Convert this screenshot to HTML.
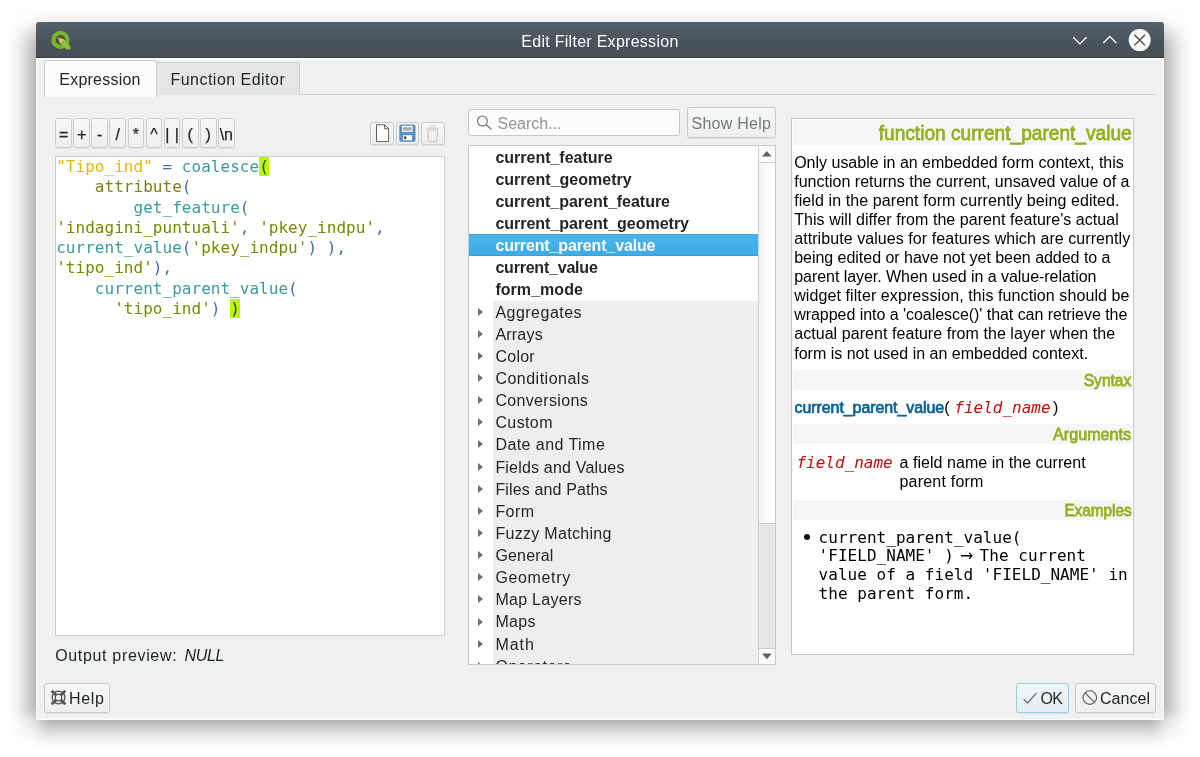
<!DOCTYPE html>
<html lang="en">
<head>
<meta charset="utf-8">
<title>Edit Filter Expression</title>
<style>
html,body{margin:0;padding:0;background:#fff;}
body{width:1200px;height:757px;position:relative;overflow:hidden;font-family:"Liberation Sans","DejaVu Sans",sans-serif;font-size:16px;color:#232627;}
div,span,pre,svg{position:absolute;box-sizing:border-box;}
span{white-space:pre;}
pre span{position:static;}
#shadow{left:0;top:0;width:1200px;height:757px;background:linear-gradient(to right,rgba(0,0,0,0.000) 7.5px,rgba(0,0,0,0.016) 11.5px,rgba(0,0,0,0.050) 16.5px,rgba(0,0,0,0.099) 21.5px,rgba(0,0,0,0.162) 26.5px,rgba(0,0,0,0.220) 31.5px,rgba(0,0,0,0.290) 36.5px,rgba(0,0,0,0.383) 39.5px,rgba(0,0,0,0.464) 42.5px,rgba(0,0,0,0.534) 46.5px,rgba(0,0,0,0.580) 51.5px,rgba(0,0,0,0.580) 1148.5px,rgba(0,0,0,0.534) 1153.5px,rgba(0,0,0,0.464) 1157.5px,rgba(0,0,0,0.383) 1160.5px,rgba(0,0,0,0.290) 1163.5px,rgba(0,0,0,0.220) 1168.5px,rgba(0,0,0,0.162) 1173.5px,rgba(0,0,0,0.099) 1178.5px,rgba(0,0,0,0.050) 1183.5px,rgba(0,0,0,0.016) 1188.5px,rgba(0,0,0,0.000) 1192.5px);-webkit-mask-image:linear-gradient(to bottom,rgba(0,0,0,0.000) 8.0px,rgba(0,0,0,0.050) 15.0px,rgba(0,0,0,0.110) 22.0px,rgba(0,0,0,0.250) 26.0px,rgba(0,0,0,0.420) 30.0px,rgba(0,0,0,0.620) 35.0px,rgba(0,0,0,0.800) 40.0px,rgba(0,0,0,0.920) 45.0px,rgba(0,0,0,1.000) 52.0px,rgba(0,0,0,1.000) 705.3px,rgba(0,0,0,0.920) 710.3px,rgba(0,0,0,0.800) 714.3px,rgba(0,0,0,0.660) 717.3px,rgba(0,0,0,0.500) 720.3px,rgba(0,0,0,0.380) 725.3px,rgba(0,0,0,0.280) 730.3px,rgba(0,0,0,0.170) 735.3px,rgba(0,0,0,0.086) 740.3px,rgba(0,0,0,0.028) 745.3px,rgba(0,0,0,0.000) 749.3px);mask-image:linear-gradient(to bottom,rgba(0,0,0,0.000) 8.0px,rgba(0,0,0,0.050) 15.0px,rgba(0,0,0,0.110) 22.0px,rgba(0,0,0,0.250) 26.0px,rgba(0,0,0,0.420) 30.0px,rgba(0,0,0,0.620) 35.0px,rgba(0,0,0,0.800) 40.0px,rgba(0,0,0,0.920) 45.0px,rgba(0,0,0,1.000) 52.0px,rgba(0,0,0,1.000) 705.3px,rgba(0,0,0,0.920) 710.3px,rgba(0,0,0,0.800) 714.3px,rgba(0,0,0,0.660) 717.3px,rgba(0,0,0,0.500) 720.3px,rgba(0,0,0,0.380) 725.3px,rgba(0,0,0,0.280) 730.3px,rgba(0,0,0,0.170) 735.3px,rgba(0,0,0,0.086) 740.3px,rgba(0,0,0,0.028) 745.3px,rgba(0,0,0,0.000) 749.3px);}
#win{left:36.2px;top:22px;width:1127.8px;height:698px;background:#eff0f1;border-radius:3px 3px 0 0;box-shadow:inset 1.5px 0 0 #fbfcfc,inset -1.5px 0 0 #fbfcfc,inset 0 -1.4px 0 #fbfcfc;}
#titlebar{left:36.2px;top:22px;width:1127.8px;height:36.1px;background:linear-gradient(#56606a,#48525a 60%,#465055);border-radius:3px 3px 0 0;border-bottom:1.2px solid #3a4147;}
#topline{left:36.2px;top:58.1px;width:1127.8px;height:1.5px;background:#fbfcfc;}
#root{left:0;top:0;width:1200px;height:757px;will-change:transform;}
#tab1{left:44px;top:60px;width:112.5px;height:37px;background:#fcfcfc;border:1px solid #cdcfd0;border-bottom:none;border-radius:3px 3px 0 0;}
#tab2{left:156.5px;top:62px;width:143px;height:33px;background:#e4e5e6;border:1px solid #cbcdce;border-left:none;border-bottom:none;border-radius:0 3px 0 0;}
#tabline{left:299px;top:94px;width:857px;height:1px;background:#cfd1d2;}
.btn{border:1px solid #c8cacb;border-radius:3px;background:linear-gradient(#f6f7f7,#edeeef);box-shadow:0 1px 1px rgba(0,0,0,.07);}
.op{top:118px;width:16.8px;height:30.4px;border-radius:2.5px;border-color:#cdcfd0;}
.opt{top:124.8px;width:16.8px;text-align:center;height:20px;line-height:20px;-webkit-text-stroke:.25px #232627;}
#editor{left:55px;top:156px;width:389.7px;height:480px;background:#fff;border:1px solid #cbcdce;}
#code{left:56.2px;top:157.2px;letter-spacing:.03px;margin:0;font-family:"DejaVu Sans Mono","Liberation Mono",monospace;font-size:16px;line-height:20.25px;white-space:pre;}
.qi{color:#eab700}.opc{color:#4271ae}.fn{color:#3e999f}.kw{color:#7f7f17}.st{color:#718c00}.pa{color:#4271ae}.mb{background:#b7f907;color:#373737}
#search{left:468px;top:109px;width:212px;height:27px;background:#fcfcfc;border:1px solid #c6c8c9;border-radius:3px;}
#list{left:468px;top:145px;width:308px;height:520px;background:#fff;border:1px solid #c6c8c9;overflow:hidden;}
#listin{left:0;top:0;width:290px;height:518px;overflow:hidden;}
.row{left:0;width:290px;height:22.13px;}
.grp{left:24px;width:265px;height:22.13px;background:#eeeeee;}
.sel{left:0;width:289.5px;height:21.9px;background:linear-gradient(#4ab4ec,#3eabe6);border-top:1px solid #3fa6dd;border-bottom:1px solid #3b9fd6;}
.arr{left:9px;width:0;height:0;border-left:5px solid #6c6e6f;border-top:4.5px solid transparent;border-bottom:4.5px solid transparent;}
#sb{left:758px;top:146px;width:16.5px;height:518px;background:linear-gradient(90deg,#f2f2f2,#fdfdfd 40%,#fff);border-left:1px solid #cfd0d1;}
#help{left:791px;top:118.4px;width:343px;height:536.5px;background:#fff;border:1px solid #c6c8c9;overflow:hidden;}
.band{left:793px;width:339px;background:#f6f6f6;}
.h{color:#93b023;font-weight:bold;}
.hl{height:19px;line-height:19px;}
.mono{font-family:"DejaVu Sans Mono","Liberation Mono",monospace;}
</style>
</head>
<body>
<div id="root">
<div id="shadow"></div>
<div id="win"></div>
<div id="titlebar"></div>
<div id="topline"></div>
<span style="left:521.3px;color:#fcfcfc;top:32px;height:20px;line-height:20px;letter-spacing:0.278px">Edit Filter Expression</span>

<div id="tab1"></div>
<div id="tab2"></div>
<div id="tabline"></div>
<span style="left:59.3px;top:70.2px;height:20px;line-height:20px;letter-spacing:0.227px">Expression</span>
<span style="left:170.5px;top:70.2px;height:20px;line-height:20px;letter-spacing:0.471px">Function Editor</span>

<div class="btn op" style="left:55.20px"></div><span class="opt" style="left:55.20px">=</span><div class="btn op" style="left:73.28px"></div><span class="opt" style="left:73.28px">+</span><div class="btn op" style="left:91.36px"></div><span class="opt" style="left:91.36px">-</span><div class="btn op" style="left:109.44px"></div><span class="opt" style="left:109.44px">/</span><div class="btn op" style="left:127.52px"></div><span class="opt" style="left:127.52px">*</span><div class="btn op" style="left:145.60px"></div><span class="opt" style="left:145.60px">^</span><div class="btn op" style="left:163.68px"></div><span class="opt" style="left:163.68px"><i style="font-style:normal;letter-spacing:5.4px;margin-right:-5.4px">||</i></span><div class="btn op" style="left:181.76px"></div><span class="opt" style="left:181.76px">(</span><div class="btn op" style="left:199.84px"></div><span class="opt" style="left:199.84px">)</span><div class="btn op" style="left:217.92px"></div><span class="opt" style="left:217.92px">\n</span>

<div class="btn" style="left:370.2px;top:121.8px;width:23.6px;height:23.6px"></div>
<div class="btn" style="left:395.6px;top:121.8px;width:23.6px;height:23.6px"></div>
<div class="btn" style="left:421px;top:121.8px;width:23.6px;height:23.6px"></div>

<div id="editor"></div>
<pre id="code"><span class="qi">"Tipo_ind"</span> <span class="opc">=</span> <span class="fn">coalesce</span><span class="mb">(</span>
    <span class="kw">attribute</span><span class="pa">(</span>
        <span class="fn">get_feature</span><span class="pa">(</span>
<span class="st">'indagini_puntuali'</span><span class="pa">,</span> <span class="st">'pkey_indpu'</span><span class="pa">,</span>
<span class="fn">current_value</span><span class="pa">(</span><span class="st">'pkey_indpu'</span><span class="pa">)</span> <span class="pa">),</span>
<span class="st">'tipo_ind'</span><span class="pa">),</span>
    <span class="fn">current_parent_value</span><span class="pa">(</span>
      <span class="st">'tipo_ind'</span><span class="pa">)</span> <span class="mb">)</span></pre>

<span style="left:55.2px;top:645.8px;height:20px;line-height:20px;letter-spacing:0.667px">Output preview:</span>
<span style="left:184.5px;font-style:italic;top:645.8px;height:20px;line-height:20px;letter-spacing:-0.302px">NULL</span>

<div id="search"></div>
<span style="left:497.5px;color:#929496;top:113.6px;height:20px;line-height:20px;letter-spacing:-0.004px">Search...</span>
<div class="btn" style="left:686.5px;top:107px;width:89.5px;height:30.6px"></div>
<span style="left:691.5px;color:#75787a;top:113.8px;height:20px;line-height:20px;letter-spacing:0.266px">Show Help</span>

<div id="list"></div>
<div id="listin" style="left:469px;top:145.7px">
<span style="left:26.4px;top:2.00px;height:20px;line-height:20px;font-weight:bold;letter-spacing:-0.005px">current_feature</span>
<span style="left:26.4px;top:24.13px;height:20px;line-height:20px;font-weight:bold;letter-spacing:0.017px">current_geometry</span>
<span style="left:26.4px;top:46.26px;height:20px;line-height:20px;font-weight:bold;letter-spacing:-0.027px">current_parent_feature</span>
<span style="left:26.4px;top:68.39px;height:20px;line-height:20px;font-weight:bold;letter-spacing:-0.011px">current_parent_geometry</span>
<div class="sel" style="top:88.52px"></div>
<span style="left:26.4px;top:90.52px;height:20px;line-height:20px;font-weight:bold;color:#fcfcfc;letter-spacing:-0.139px">current_parent_value</span>
<span style="left:26.4px;top:112.65px;height:20px;line-height:20px;font-weight:bold;letter-spacing:-0.211px">current_value</span>
<span style="left:26.4px;top:134.78px;height:20px;line-height:20px;font-weight:bold;letter-spacing:0.047px">form_mode</span>
<div class="grp" style="top:154.91px"></div>
<div class="arr" style="top:162.01px"></div>
<span style="left:26.4px;top:156.91px;height:20px;line-height:20px;letter-spacing:0.484px">Aggregates</span>
<div class="grp" style="top:177.04px"></div>
<div class="arr" style="top:184.14px"></div>
<span style="left:26.4px;top:179.04px;height:20px;line-height:20px;letter-spacing:0.213px">Arrays</span>
<div class="grp" style="top:199.17px"></div>
<div class="arr" style="top:206.27px"></div>
<span style="left:26.4px;top:201.17px;height:20px;line-height:20px;letter-spacing:0.266px">Color</span>
<div class="grp" style="top:221.30px"></div>
<div class="arr" style="top:228.40px"></div>
<span style="left:26.4px;top:223.30px;height:20px;line-height:20px;letter-spacing:0.494px">Conditionals</span>
<div class="grp" style="top:243.43px"></div>
<div class="arr" style="top:250.53px"></div>
<span style="left:26.4px;top:245.43px;height:20px;line-height:20px;letter-spacing:0.336px">Conversions</span>
<div class="grp" style="top:265.56px"></div>
<div class="arr" style="top:272.66px"></div>
<span style="left:26.4px;top:267.56px;height:20px;line-height:20px;letter-spacing:0.395px">Custom</span>
<div class="grp" style="top:287.69px"></div>
<div class="arr" style="top:294.79px"></div>
<span style="left:26.4px;top:289.69px;height:20px;line-height:20px;letter-spacing:0.445px">Date and Time</span>
<div class="grp" style="top:309.82px"></div>
<div class="arr" style="top:316.92px"></div>
<span style="left:26.4px;top:311.82px;height:20px;line-height:20px;letter-spacing:0.188px">Fields and Values</span>
<div class="grp" style="top:331.95px"></div>
<div class="arr" style="top:339.05px"></div>
<span style="left:26.4px;top:333.95px;height:20px;line-height:20px;letter-spacing:0.137px">Files and Paths</span>
<div class="grp" style="top:354.08px"></div>
<div class="arr" style="top:361.18px"></div>
<span style="left:26.4px;top:356.08px;height:20px;line-height:20px;letter-spacing:0.457px">Form</span>
<div class="grp" style="top:376.21px"></div>
<div class="arr" style="top:383.31px"></div>
<span style="left:26.4px;top:378.21px;height:20px;line-height:20px;letter-spacing:0.304px">Fuzzy Matching</span>
<div class="grp" style="top:398.34px"></div>
<div class="arr" style="top:405.44px"></div>
<span style="left:26.4px;top:400.34px;height:20px;line-height:20px;letter-spacing:0.18px">General</span>
<div class="grp" style="top:420.47px"></div>
<div class="arr" style="top:427.57px"></div>
<span style="left:26.4px;top:422.47px;height:20px;line-height:20px;letter-spacing:0.65px">Geometry</span>
<div class="grp" style="top:442.60px"></div>
<div class="arr" style="top:449.70px"></div>
<span style="left:26.4px;top:444.60px;height:20px;line-height:20px;letter-spacing:0.29px">Map Layers</span>
<div class="grp" style="top:464.73px"></div>
<div class="arr" style="top:471.83px"></div>
<span style="left:26.4px;top:466.73px;height:20px;line-height:20px;letter-spacing:0.292px">Maps</span>
<div class="grp" style="top:486.86px"></div>
<div class="arr" style="top:493.96px"></div>
<span style="left:26.4px;top:488.86px;height:20px;line-height:20px;letter-spacing:0.941px">Math</span>
<div class="grp" style="top:508.99px"></div>
<div class="arr" style="top:516.09px"></div>
<span style="left:26.4px;top:510.99px;height:20px;line-height:20px;letter-spacing:0.545px">Operators</span>
</div>

<div id="sb"></div>
<div style="left:759px;top:146px;width:16px;height:16.5px;background:#fbfbfb;border-bottom:1px solid #d2d3d4"></div>
<div style="left:759px;top:522.5px;width:16px;height:126px;background:#e6e6e6;border-top:1px solid #cbcbcc;border-bottom:1px solid #cbcbcc"></div>
<div style="left:759px;top:648.5px;width:16px;height:15.5px;background:#fbfbfb"></div>
<svg style="left:759px;top:146px" width="17" height="518" viewBox="759 146 17 518">
 <path d="M761.9 156.5 L766.8 150.9 L771.7 156.5 Z" fill="#606263"/>
 <path d="M762 653.6 L771.8 653.6 L766.9 659.2 Z" fill="#606263"/>
</svg>


<div id="help"></div>
<div class="band" style="top:119.5px;height:25px"></div>
<span style="right:68.40000000000009px;transform-origin:100% 50%;font-size:20.7px;color:#93b023;-webkit-text-stroke:.8px #93b023;top:121.3px;height:24px;line-height:24px;transform:scaleX(0.9243)">function current_parent_value</span>
<span style="left:794.2px;color:#000;top:152.5px;height:19px;line-height:19px;letter-spacing:-0.008px">Only usable in an embedded form context, this</span>
<span style="left:794.2px;color:#000;top:171.6px;height:19px;line-height:19px;letter-spacing:0.019px">function returns the current, unsaved value of a</span>
<span style="left:794.2px;color:#000;top:190.7px;height:19px;line-height:19px;letter-spacing:0.09px">field in the parent form currently being edited.</span>
<span style="left:794.2px;color:#000;top:209.8px;height:19px;line-height:19px;letter-spacing:0.054px">This will differ from the parent feature's actual</span>
<span style="left:794.2px;color:#000;top:228.9px;height:19px;line-height:19px;letter-spacing:0.071px">attribute values for features which are currently</span>
<span style="left:794.2px;color:#000;top:248.0px;height:19px;line-height:19px;letter-spacing:-0.03px">being edited or have not yet been added to a</span>
<span style="left:794.2px;color:#000;top:267.1px;height:19px;line-height:19px;letter-spacing:-0.045px">parent layer. When used in a value-relation</span>
<span style="left:794.2px;color:#000;top:286.2px;height:19px;line-height:19px;letter-spacing:0.093px">widget filter expression, this function should be</span>
<span style="left:794.2px;color:#000;top:305.3px;height:19px;line-height:19px;letter-spacing:-0.043px">wrapped into a 'coalesce()' that can retrieve the</span>
<span style="left:794.2px;color:#000;top:324.4px;height:19px;line-height:19px;letter-spacing:0.059px">actual parent feature from the layer when the</span>
<span style="left:794.2px;color:#000;top:343.5px;height:19px;line-height:19px;letter-spacing:0.01px">form is not used in an embedded context.</span>
<div class="band" style="top:370.2px;height:19.5px"></div>
<span style="right:68.40000000000009px;transform-origin:100% 50%;font-size:16.8px;color:#93b023;-webkit-text-stroke:.8px #93b023;top:371px;height:20px;line-height:20px;transform:scaleX(0.9276)">Syntax</span>
<span style="left:794.6px;color:#0a6099;-webkit-text-stroke:.7px #0a6099;top:397.5px;height:20px;line-height:20px;letter-spacing:-0.085px">current_parent_value</span>
<span style="left:944.2px;top:397.5px;height:20px;line-height:20px;color:#000">(</span>
<span style="left:954.3px;color:#bf0c0c;font-style:italic;font-family:'DejaVu Sans Mono','Liberation Mono',monospace;top:397.5px;height:20px;line-height:20px;letter-spacing:-0.003px">field_name</span>
<span style="left:1053px;top:397.5px;height:20px;line-height:20px;color:#000">)</span>
<div class="band" style="top:424.2px;height:19.5px"></div>
<span style="right:68.40000000000009px;transform-origin:100% 50%;font-size:16.8px;color:#93b023;-webkit-text-stroke:.8px #93b023;top:425px;height:20px;line-height:20px;transform:scaleX(0.9623)">Arguments</span>
<span style="left:796.4px;color:#bf0c0c;font-style:italic;font-family:'DejaVu Sans Mono','Liberation Mono',monospace;top:452.8px;height:20px;line-height:20px;letter-spacing:-0.003px">field_name</span>
<span style="left:899.6px;color:#000;top:452.8px;height:20px;line-height:20px;letter-spacing:0.038px">a field name in the current</span>
<span style="left:899.4px;color:#000;top:471.6px;height:20px;line-height:20px;letter-spacing:0.219px">parent form</span>
<div class="band" style="top:500.4px;height:19.5px"></div>
<span style="right:68.40000000000009px;transform-origin:100% 50%;font-size:16.8px;color:#93b023;-webkit-text-stroke:.8px #93b023;top:501.2px;height:20px;line-height:20px;transform:scaleX(0.9133)">Examples</span>
<div style="left:803.6px;top:534.2px;width:6.2px;height:6.2px;border-radius:3.1px;background:#111"></div>
<span style="left:818.6px;color:#000;font-family:'DejaVu Sans Mono','Liberation Mono',monospace;top:527.7px;height:19px;line-height:19px;letter-spacing:0.028px">current_parent_value(</span>
<span style="left:818.6px;color:#000;font-family:'DejaVu Sans Mono','Liberation Mono',monospace;top:546.4px;height:19px;line-height:19px;letter-spacing:0.029px">'FIELD_NAME' )</span>
<span style="left:953.6px;top:546.4px;width:26px;text-align:center;height:19px;line-height:19px;color:#000;font-family:'DejaVu Sans',sans-serif;font-size:16px">→</span>
<span style="left:979.6px;color:#000;font-family:'DejaVu Sans Mono','Liberation Mono',monospace;top:546.4px;height:19px;line-height:19px;letter-spacing:0.029px">The current</span>
<span style="left:818.6px;color:#000;font-family:'DejaVu Sans Mono','Liberation Mono',monospace;top:565.1px;height:19px;line-height:19px;letter-spacing:0.028px">value of a field 'FIELD_NAME' in</span>
<span style="left:818.6px;color:#000;font-family:'DejaVu Sans Mono','Liberation Mono',monospace;top:583.8px;height:19px;line-height:19px;letter-spacing:0.029px">the parent form.</span>

<div class="btn" style="left:44.2px;top:683px;width:65.4px;height:30px"></div>
<span style="left:69px;top:688.6px;height:20px;line-height:20px;letter-spacing:0.698px">Help</span>
<div class="btn" style="left:1015.6px;top:683px;width:53.4px;height:30px;border-color:#93cee9;background:linear-gradient(#f0f6fa,#e4eef4)"></div>
<span style="left:1040.5px;top:688.6px;height:20px;line-height:20px;letter-spacing:-0.625px">OK</span>
<div class="btn" style="left:1075.2px;top:683px;width:80.5px;height:30px"></div>
<span style="left:1100px;top:688.6px;height:20px;line-height:20px;letter-spacing:0.037px">Cancel</span>

<!-- QGIS logo -->
<svg style="left:49px;top:29px" width="24" height="24" viewBox="49 29 24 24">
 <circle cx="60.4" cy="39.9" r="4.9" fill="#46524a"/>
 <circle cx="60.4" cy="39.9" r="7" fill="none" stroke="#76b42d" stroke-width="4.3"/>
 <path d="M60 43.2 L63.8 39.4 L70.3 45.9 L70.3 49.5 L66.4 49.5 Z" fill="#86c23a"/>
 <path d="M57.4 37 L63.9 39.5 L60.1 43.3 Z" fill="#eea534"/>
 <path d="M61.3 38.5 L63.9 39.5 L60.1 43.3 L59.1 40.7 Z" fill="#e2c95a"/>
</svg>
<!-- title buttons -->
<svg style="left:1068px;top:26px" width="90" height="30" viewBox="1068 26 90 30" fill="none" stroke="#fcfcfc" stroke-width="1.35">
 <path d="M1073.3 37.3 L1079.9 43.9 L1086.5 37.3"/>
 <path d="M1103.3 42.9 L1109.8 36.4 L1116.3 42.9"/>
 <circle cx="1139.7" cy="40.1" r="11" fill="#fcfcfc" stroke="none"/>
 <path d="M1134.4 34.8 L1145 45.4 M1145 34.8 L1134.4 45.4" stroke="#3b4045" stroke-width="1.3"/>
</svg>
<!-- toolbar icons -->
<svg style="left:370px;top:121px" width="76" height="26" viewBox="370 121 76 26">
 <path d="M376.5 124.8 H384.8 L388.6 128.6 V141.6 H376.5 Z" fill="#fff" stroke="#5f6163" stroke-width="1"/>
 <path d="M384.6 124.9 V128.8 H388.5" fill="none" stroke="#5f6163" stroke-width="1"/>
 <rect x="399.3" y="124.4" width="16.2" height="17.4" rx="1.8" fill="#5e8ec3"/>
 <rect x="402" y="125.8" width="10.6" height="6" fill="#fff"/>
 <rect x="403" y="127.2" width="8.6" height="3.4" fill="#a8a8a8"/>
 <rect x="403" y="135.2" width="9" height="5" fill="#fff"/>
 <rect x="404.2" y="136.2" width="2" height="3" rx=".8" fill="#26364d"/>
 <g fill="none" stroke="#c9c9ca" stroke-width="1">
  <path d="M426.3 128.2 H439"/>
  <path d="M430.6 128 V126 H434.6 V128"/>
  <path d="M427.4 130 L428.4 141.6 H436.8 L437.8 130 Z" fill="#e6e6e6"/>
  <path d="M430.7 131.5 V140 M432.6 131.5 V140 M434.5 131.5 V140" stroke="#fafafa" stroke-width="1.2"/>
 </g>
</svg>
<!-- search icon -->
<svg style="left:474px;top:112px" width="22" height="22" viewBox="474 112 22 22" fill="none" stroke="#7b7d7f" stroke-width="1.3">
 <circle cx="482.4" cy="121" r="4.9"/>
 <path d="M485.9 124.6 L491.4 129.3"/>
</svg>
<!-- help icon -->
<svg style="left:49px;top:688px" width="20" height="20" viewBox="49 688 20 20" fill="none" stroke="#505254">
 <circle cx="58.5" cy="697.5" r="6.4" stroke-width="1.3"/>
 <circle cx="58.5" cy="697.5" r="3.3" stroke-width="1.3"/>
 <path d="M60.76 699.76 L65.29 704.29 M56.24 699.76 L51.71 704.29 M56.24 695.24 L51.71 690.71 M60.76 695.24 L65.29 690.71" stroke-width="2.7"/>
</svg>
<!-- ok / cancel icons -->
<svg style="left:1020px;top:688px" width="80" height="20" viewBox="1020 688 80 20" fill="none" stroke="#56585a" stroke-width="1.1">
 <path d="M1023.6 699.2 L1027.6 702.9 L1036.4 693.2"/>
 <circle cx="1089.8" cy="697.6" r="6.8"/>
 <path d="M1085 692.8 L1094.6 702.4"/>
</svg>
</div>
</body>
</html>
